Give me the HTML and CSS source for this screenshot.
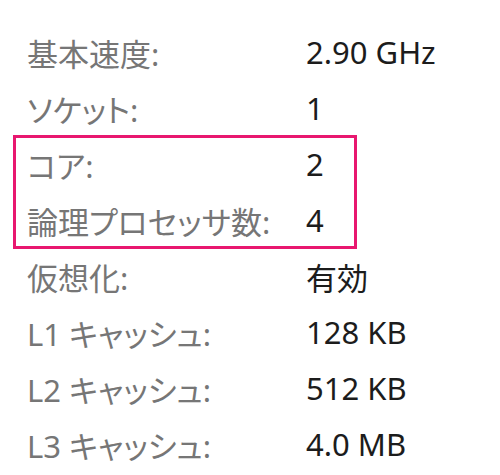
FILE: index.html
```html
<!DOCTYPE html>
<html lang="ja">
  <head>
    <meta charset="UTF-8" />
    <title>CPU</title>
    <link rel="stylesheet" href="styles.css">
  </head>
  <body>
    <div class="specs">
      <div class="row"><span class="label">基本速度:</span><span class="value">2.90 GHz</span></div>
      <div class="row"><span class="label">ソケット:</span><span class="value">1</span></div>
      <!-- highlighted group -->
      <div class="group">
        <div class="row"><span class="label">コア:</span><span class="value">2</span></div>
        <div class="row"><span class="label">論理プロセッサ数:</span><span class="value">4</span></div>
      </div>
      <div class="row"><span class="label">仮想化:</span><span class="value">有効</span></div>
      <div class="row"><span class="label">L1 キャッシュ:</span><span class="value">128 KB</span></div>
      <div class="row"><span class="label">L2 キャッシュ:</span><span class="value">512 KB</span></div>
      <div class="row"><span class="label">L3 キャッシュ:</span><span class="value">4.0 MB</span></div>
    </div>
  </body>
</html>
```

FILE: styles.css
```css
body {
  margin: 0;
  background-color: #fff;
  font-family: "Noto Sans", "Noto Sans CJK JP", sans-serif;
}
.specs {
  padding-top: 24px;
}
.row {
  display: grid;
  grid-template-columns: 279px auto;
  height: 56px;
  align-items: center;
  padding-left: 27px;
  font-size: 31px;
}
.label {
  color: #767676;
  font-feature-settings: "palt";
}
.value {
  color: #1c1c1c;
}
.group {
  width: 342px;
  margin-left: 14px;
  outline: 3px solid #e8176f;
  outline-offset: -2px;
}
.group .row {
  padding-left: 13px;
}
```
